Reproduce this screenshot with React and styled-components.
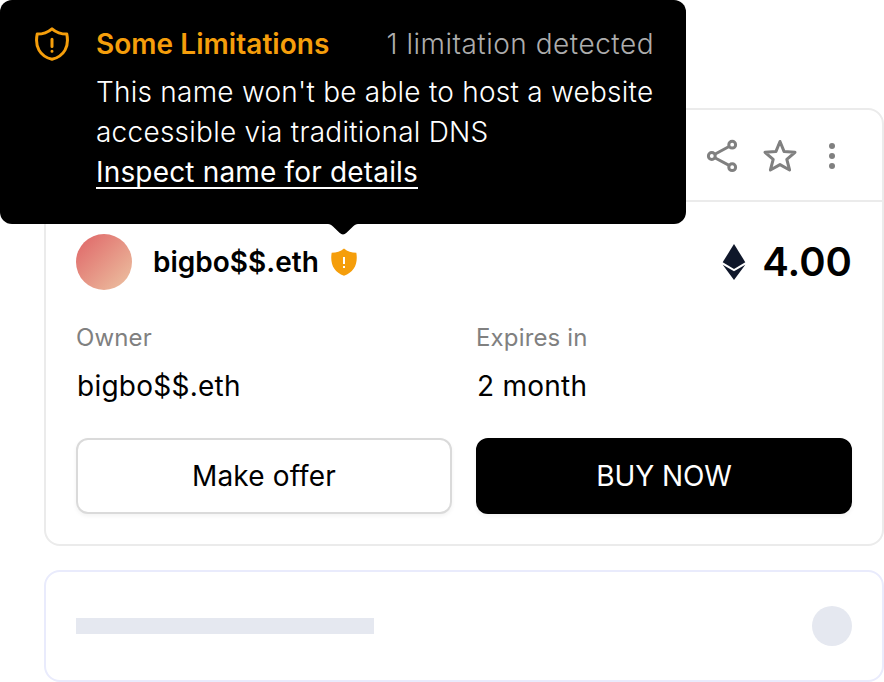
import React from "react";
import styled, { createGlobalStyle } from "styled-components";

const GlobalStyle = createGlobalStyle`
  * { box-sizing: border-box; }
  body {
    margin: 0;
    background: #fff;
    color: #000;
    font-family: Inter, "Liberation Sans", sans-serif;
    overflow: hidden;
  }
`;

const Page = styled.main`
  position: relative;
  width: 884px;
  height: 682px;
  padding: 108px 0 0 44px;
  display: flex;
  flex-direction: column;
  gap: 24px;
`;

const Card = styled.section`
  height: 438px;
  border: 2px solid #ebebeb;
  border-radius: 16px;
  background: #fff;
`;

const CardToolbar = styled.header`
  height: 92px;
  padding: 0 34px 0 0;
  border-bottom: 2px solid #ebebeb;
  display: flex;
  align-items: center;
  justify-content: flex-end;
  gap: 22px;
`;

const IconButton = styled.button`
  width: ${({ $width }) => $width || 36}px;
  height: 36px;
  padding: 0;
  border: 0;
  background: none;
  color: #808080;
  display: flex;
  margin-top: 2px;
  svg { display: block; overflow: visible; }
`;

const CardBody = styled.div`
  padding: 32px 30px 30px;
`;

const NameRow = styled.div`
  height: 56px;
  display: flex;
  align-items: center;
`;

const Avatar = styled.div`
  width: 56px;
  height: 56px;
  border-radius: 50%;
  background: linear-gradient(135deg, #e06b6b 8%, #ecc0a0 96%);
`;

const DomainName = styled.h1`
  margin: 0 12px 0 21px;
  font-size: 28px;
  line-height: 40px;
  font-weight: 600;
`;

const Price = styled.div`
  margin-left: auto;
  display: flex;
  align-items: center;
  gap: 16px;
  font-size: 40px;
  line-height: 56px;
  font-weight: 600;
  svg { display: block; }
`;

const Details = styled.dl`
  margin: 28px 0 0;
  display: grid;
  grid-template-columns: 1fr 1fr;
  column-gap: 24px;
`;

const Label = styled.dt`
  font-size: 24px;
  line-height: 40px;
  letter-spacing: 0.15px;
  color: #808080;
`;

const Value = styled.dd`
  margin: 8px 0 0 1px;
  font-size: 28px;
  line-height: 40px;
  letter-spacing: 0.25px;
`;

const Actions = styled.div`
  margin-top: 32px;
  display: grid;
  grid-template-columns: 1fr 1fr;
  gap: 24px;
`;

const ActionButton = styled.button`
  height: 76px;
  padding: 0;
  border: 2px solid ${({ $primary }) => ($primary ? "#000" : "#dadada")};
  border-radius: 12px;
  background: ${({ $primary }) => ($primary ? "#000" : "#fff")};
  color: ${({ $primary }) => ($primary ? "#fff" : "#000")};
  font: 400 28px/40px Inter, "Liberation Sans", sans-serif;
  letter-spacing: ${({ $primary }) => ($primary ? "-0.1px" : "0.15px")};
  box-shadow: 0 2px 4px rgba(0, 0, 0, 0.05);
`;

const SkeletonCard = styled.section`
  height: 112px;
  padding: 0 30px;
  border: 2px solid #e9ebfc;
  border-radius: 16px;
  display: flex;
  align-items: center;
  justify-content: space-between;
`;

const SkeletonBar = styled.div`
  width: 298px;
  height: 16px;
  background: #e5e8f0;
`;

const SkeletonDot = styled.div`
  width: 40px;
  height: 40px;
  border-radius: 50%;
  background: #e5e8f0;
`;

const Tooltip = styled.aside`
  position: absolute;
  left: 0;
  top: 0;
  width: 686px;
  height: 224px;
  padding: 24px 32px 0 34px;
  border-radius: 12px;
  background: #000;
  color: #fff;
  display: flex;
  gap: 26px;
`;

const TooltipIcon = styled.div`
  width: 36px;
  height: 40px;
  display: flex;
  align-items: center;
`;

const TooltipContent = styled.div`
  flex: 1;
  font-size: 28px;
  line-height: 40px;
  white-space: nowrap;
`;

const TooltipHeading = styled.div`
  display: flex;
  justify-content: space-between;
  margin-bottom: 8px;
`;

const TooltipTitle = styled.strong`
  font-weight: 600;
  letter-spacing: 0.05px;
  color: #f59e0b;
`;

const TooltipCount = styled.span`
  font-weight: 300;
  letter-spacing: 0.5px;
  color: #adadad;
`;

const TooltipText = styled.p`
  margin: 0;
  font-weight: 300;
  letter-spacing: 0.24px;
`;

const InspectLink = styled.a`
  display: block;
  width: fit-content;
  height: 37px;
  border-bottom: 2px solid #fff;
  font-weight: 400;
  letter-spacing: 0.17px;
`;

const TooltipArrow = styled.svg`
  position: absolute;
  left: 328px;
  top: 223px;
`;

function ShieldOutline() {
  return (
    <svg width="36" height="40" viewBox="0 -2 36 40" fill="none" stroke="#f59e0b" strokeWidth="3" strokeLinejoin="round">
      <path d="M18 2.8 C13.8 6.4 8.7 8.1 3.2 8.1 C.7 20.3 5.5 30.2 18 33.3 C30.5 30.2 35.3 20.3 32.8 8.1 C27.3 8.1 22.2 6.4 18 2.8Z" />
      <path d="M18 13.3V20.5M18 25.2V25.3" strokeLinecap="round" />
    </svg>
  );
}

function ShieldFilled() {
  return (
    <svg width="26" height="28" viewBox="0 0 26 28">
      <path fill="#f59e0b" d="M13 .6 C9.5 3.6 5.5 4.7 .7 4.8 C-1.2 15.5 2.7 24.5 13 27.7 C23.3 24.5 27.2 15.5 25.3 4.8 C20.5 4.7 16.5 3.6 13 .6Z" />
      <path fill="none" stroke="#fff" strokeWidth="2" d="M13 9V16M13 18V20" />
    </svg>
  );
}

function ShareIcon() {
  return (
    <svg width="36" height="36" viewBox="0 0 36 36" fill="none" stroke="currentColor" strokeWidth="3">
      <circle cx="7.8" cy="18" r="3.4" />
      <circle cx="28.2" cy="6.7" r="3.4" />
      <circle cx="28.2" cy="29.2" r="3.4" />
      <path d="M10.8 16.3L25.1 8.5M10.8 19.8L25.1 27.4" />
    </svg>
  );
}

function StarIcon() {
  return (
    <svg width="36" height="36" viewBox="0 0 36 36" fill="none" stroke="currentColor" strokeWidth="3" strokeLinejoin="round">
      <path d="M18 3.5L22 13.4L33 14.3L24.8 21.4L27.6 32L18 26.6L8.4 32L11.2 21.4L3 14.3L14 13.4Z" />
    </svg>
  );
}

function MoreIcon() {
  return (
    <svg width="24" height="36" viewBox="0 0 24 36" fill="currentColor">
      <circle cx="12" cy="8" r="3" />
      <circle cx="12" cy="18" r="3" />
      <circle cx="12" cy="28" r="3" />
    </svg>
  );
}

function EthIcon() {
  return (
    <svg width="24" height="36" viewBox="0 0 24 36" fill="#0f172a">
      <path d="M12 0L23.3 18.2L12 25L.7 18.2Z" />
      <path d="M.7 20.7L12 27.3L23.3 20.7L12 36Z" />
    </svg>
  );
}

export default function App() {
  return (
    <>
      <GlobalStyle />
      <Page>
        <Card>
          <CardToolbar>
            <IconButton aria-label="Share"><ShareIcon /></IconButton>
            <IconButton aria-label="Favorite"><StarIcon /></IconButton>
            <IconButton aria-label="More" $width={28}><MoreIcon /></IconButton>
          </CardToolbar>
          <CardBody>
            <NameRow>
              <Avatar />
              <DomainName>bigbo$$.eth</DomainName>
              <ShieldFilled />
              <Price><EthIcon /><span>4.00</span></Price>
            </NameRow>
            <Details>
              <div><Label>Owner</Label><Value>bigbo$$.eth</Value></div>
              <div><Label>Expires in</Label><Value>2 month</Value></div>
            </Details>
            <Actions>
              <ActionButton>Make offer</ActionButton>
              <ActionButton $primary>BUY NOW</ActionButton>
            </Actions>
          </CardBody>
        </Card>
        <SkeletonCard><SkeletonBar /><SkeletonDot /></SkeletonCard>
        <Tooltip>
          <TooltipIcon><ShieldOutline /></TooltipIcon>
          <TooltipContent>
            <TooltipHeading>
              <TooltipTitle>Some Limitations</TooltipTitle>
              <TooltipCount>1 limitation detected</TooltipCount>
            </TooltipHeading>
            <TooltipText>This name won't be able to host a website<br />accessible via traditional DNS</TooltipText>
            <InspectLink>Inspect name for details</InspectLink>
          </TooltipContent>
          <TooltipArrow width="30" height="12" viewBox="0 0 30 12">
            <path d="M0 0V1C2 1 3.5 2 5 3.5L11.5 9.8Q15 13 18.5 9.8L25 3.5C26.5 2 28 1 30 1V0Z" />
          </TooltipArrow>
        </Tooltip>
      </Page>
    </>
  );
}
